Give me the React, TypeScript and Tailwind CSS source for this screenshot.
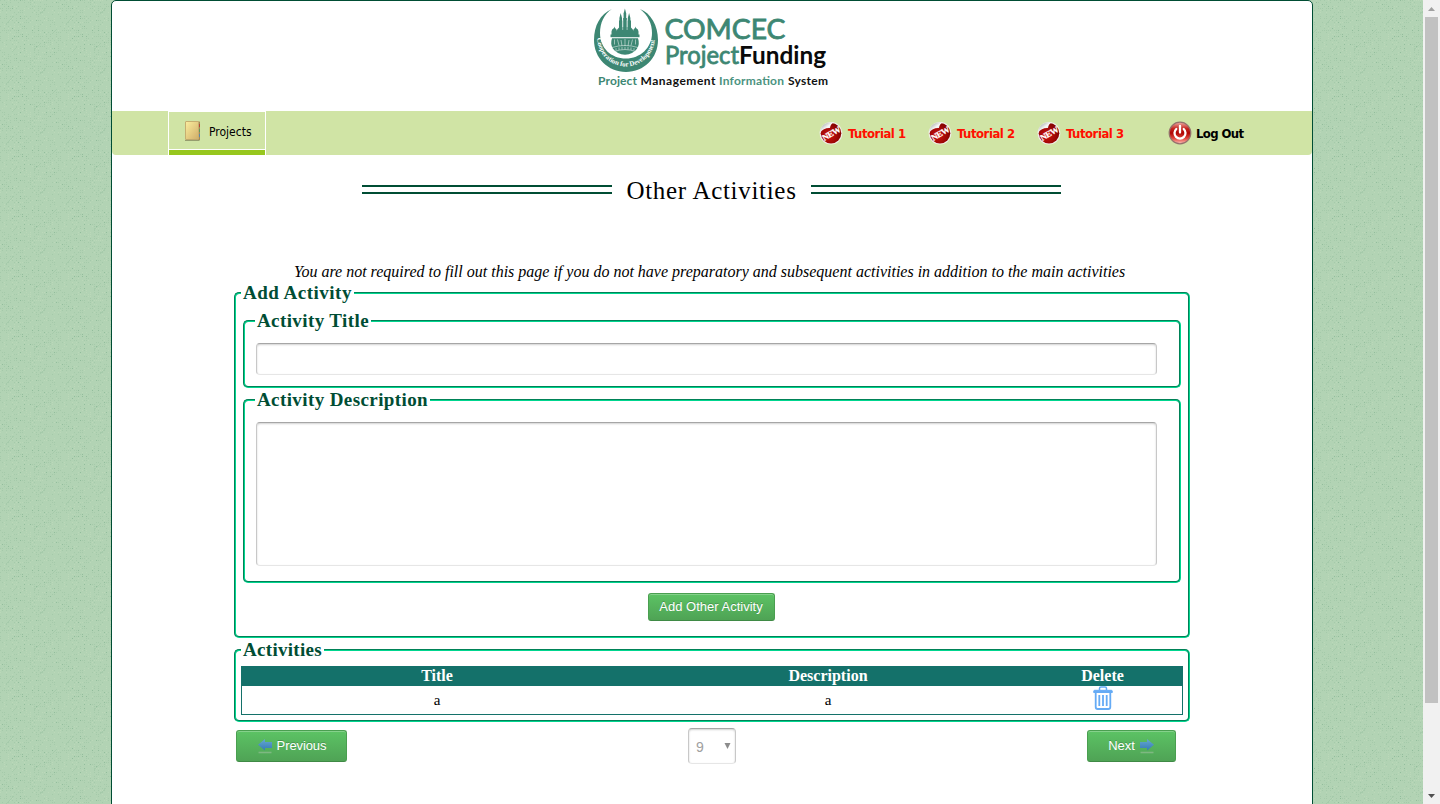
import type { ReactNode } from "react";

const fieldsetStyle =
  "rounded-[5px] border-2 [border-style:groove] border-[#00d68f] min-w-0";
const legendStyle =
  "h-[22px] px-[2px] font-['Liberation_Serif',serif] text-[19px] font-bold leading-[22px] text-[#004d34] whitespace-nowrap";
const inputStyle =
  "block w-[901px] resize-none rounded-[4px] border border-[#c8c8c8] border-t-[#a6a6a6] border-b-[#e6e6e6] bg-white shadow-[inset_0_1px_2px_rgba(0,0,0,0.18)] outline-none";
const buttonStyle =
  "flex items-center justify-center rounded-[3px] border border-[#4a9f50] border-b-[#3f8a45] bg-linear-to-b from-[#5cc364] to-[#4fa355] font-['Liberation_Sans',sans-serif] text-[13px] text-white shadow-[inset_0_1px_0_rgba(255,255,255,0.25)] [text-shadow:0_-1px_0_rgba(0,0,0,0.2)]";

const grain = Array.from({ length: 520 }, (_, i) => {
  const v = Math.sin(i * 12.9898 + 4.1) * 43758.5453;
  const w = Math.sin(i * 78.233 + 1.7) * 12543.123;
  return {
    x: Math.floor((v - Math.floor(v)) * 30) * 2,
    y: Math.floor((w - Math.floor(w)) * 30) * 2,
    fill: i % 13 === 0 ? "#92bd9c" : i % 3 === 0 ? "#bbd8b9" : "#a5caaa",
  };
});

function Texture() {
  return (
    <svg className="absolute inset-0 h-full w-full" shapeRendering="crispEdges">
      <defs>
        <pattern id="grain" width="60" height="60" patternUnits="userSpaceOnUse">
          <rect width="60" height="60" fill="#b2d3b4" />
          {grain.map((g, i) => (
            <rect key={i} x={g.x} y={g.y} width="1" height="1" fill={g.fill} />
          ))}
          <path d="M6 24l8-8M34 50l7-7M40 14l6-6M12 52l5-5M52 34l5-5" stroke="#a6cbab" strokeWidth="1" />
        </pattern>
      </defs>
      <rect width="100%" height="100%" fill="url(#grain)" />
    </svg>
  );
}

function Logo() {
  return (
    <svg width="240" height="88" viewBox="590 4 240 88" className="block">
      <defs>
        <path id="motto" d="M597 37 A29 29.500 0 0 0 655 37" />
      </defs>
      <path
        d="M612 9 C600 14 594 26 594 40 C594 58 608 72 626 72 C644 72 658 58 658 40 C658 26 651 13 640 9 C648 15 652 24 652 33 C652 48 640 58.500 626 58.500 C611 58.500 600 48 600 33 C600 23 604 14 612 9Z"
        fill="#3d8773"
      />
      <g fill="#3d8773">
        <path d="M624.900 8.500l1.300 5v18h-2.600v-18z" />
        <path d="M620.700 13l1.300 5v14h-2.600V18zM629.100 13l1.300 5v14h-2.600V18z" />
        <path d="M619 20.500h3.500v12H619zM623.200 18h3.600v14h-3.600zM627.500 20.500h3.500v12h-3.500z" />
        <path d="M616.500 31q2-4 4-4h9q2 0 4 4v5h-17z" />
        <path d="M611.500 31.500q0-2.500 2.500-3.500l.5-1.500.5 1.500q2 1 2 3.500v4h-5.500zM633 31.500q0-2.500 2-3.500l.5-1.500.5 1.500q2.500 1 2.500 3.500v4H633z" />
        <path d="M610.500 34.500h29v2.700h-29z" />
        <path d="M612 38.300h26q2 6-1 10.500q-4 5.500-12 6q-8-.5-12-6q-3-4.500-1-10.500z" />
      </g>
      <g stroke="#fff" strokeWidth="0.700" fill="none" strokeOpacity="0.7">
        <path d="M622.700 20v10M627.100 20v10M614.500 39.500v5M617.500 39.500l1.500 6M621 40l1 6M625 39v7M629 40l-1 6M632.500 39.500l-1.500 6M635.500 39.500v5" />
        <path d="M612 47.500q13-4 26 0M614.500 51.500q10.500-4 21 0" />
        <path d="M616 48.200v2.300M619 47.400v2.500M622 47v2.500M625 46.800v2.500M628 47v2.500M631 47.400v2.500M634 48.200v2.300" />
      </g>
      <text fontFamily="Liberation Serif, serif" fontSize="6.900" fontWeight="700" fill="#fff">
        <textPath href="#motto" startOffset="1">Cooperation for Development</textPath>
      </text>
      <g fontFamily="Lato, sans-serif">
        <text x="664.500" y="38.800" fontSize="27" fill="#3d8773" stroke="#3d8773" strokeWidth="0.800" textLength="121" lengthAdjust="spacingAndGlyphs">COMCEC</text>
        <text x="665" y="63.500" fontSize="25.500" fill="#3d8773" stroke="#3d8773" strokeWidth="0.800" textLength="74" lengthAdjust="spacingAndGlyphs">Project</text>
        <text x="739" y="63.500" fontSize="25.500" fontWeight="700" fill="#0a0a0a" textLength="87" lengthAdjust="spacingAndGlyphs">Funding</text>
        <text x="598" y="85" fontSize="12" fontWeight="700" fill="#3d8773" textLength="39">Project</text>
        <text x="640.500" y="85" fontSize="12" fontWeight="700" fill="#111" textLength="75">Management</text>
        <text x="719" y="85" fontSize="12" fontWeight="700" fill="#4b9380" textLength="65">Information</text>
        <text x="788" y="85" fontSize="12" fontWeight="700" fill="#111" textLength="40">System</text>
      </g>
    </svg>
  );
}

function BookIcon() {
  return (
    <svg width="17" height="22" viewBox="0 0 17 22">
      <defs>
        <linearGradient id="book" x1="0" y1="0" x2="1" y2="1">
          <stop offset="0" stopColor="#fbee9f" />
          <stop offset="1" stopColor="#d0ad68" />
        </linearGradient>
      </defs>
      <rect x="13" y="1.500" width="3" height="18.500" rx="0.500" fill="#a58a52" />
      <path d="M15 4h1v3h-1z" fill="#b5483a" />
      <path d="M15 9h1v3h-1z" fill="#5f9a55" />
      <path d="M15 14h1v3h-1z" fill="#5c86a8" />
      <rect x="1.500" y="1.500" width="13" height="18" rx="0.500" fill="url(#book)" stroke="#c6ae70" />
      <path d="M1 20.400h14.500" stroke="#6d6a46" strokeOpacity=".65" />
    </svg>
  );
}

function NewBadge() {
  return (
    <svg width="24" height="24" viewBox="0 0 24 24">
      <defs>
        <radialGradient id="badge" cx=".4" cy=".6" r=".65">
          <stop offset="0" stopColor="#d3130f" />
          <stop offset="1" stopColor="#7e0000" />
        </radialGradient>
        <linearGradient id="peel" x1="0" y1="0" x2="1" y2="1">
          <stop offset="0.150" stopColor="#a5aaa5" />
          <stop offset=".5" stopColor="#fafafa" />
          <stop offset="1" stopColor="#b0b0b0" />
        </linearGradient>
      </defs>
      <circle cx="12" cy="12.300" r="11.300" fill="#f0efe8" />
      <circle cx="12" cy="12.300" r="10.300" fill="url(#badge)" />
      <path d="M.7 12Q1 7 5 3.500Q9 .5 15 1.300Q11.500 3 11 7Q5 6.500 .7 12z" fill="url(#peel)" />
      <text x="12" y="15.500" textAnchor="middle" transform="rotate(-30 12 12)" fontFamily="Liberation Serif, serif" fontSize="8.500" fontWeight="700" fill="#fff" stroke="#fff" strokeWidth=".25" textLength="19.500" lengthAdjust="spacingAndGlyphs">
        NEW
      </text>
    </svg>
  );
}

function PowerIcon() {
  return (
    <svg width="24" height="24" viewBox="0 0 24 24">
      <defs>
        <linearGradient id="power" x1="0" y1="0" x2="0" y2="1">
          <stop offset="0" stopColor="#f0b0a8" />
          <stop offset=".3" stopColor="#c5231d" />
          <stop offset=".5" stopColor="#b00503" />
          <stop offset=".75" stopColor="#e0473e" />
          <stop offset="1" stopColor="#ffc4bb" />
        </linearGradient>
      </defs>
      <circle cx="12" cy="12" r="10.800" fill="url(#power)" stroke="#94716c" strokeWidth="1.200" />
      <path d="M8.300 8a5.500 5.500 0 1 0 7.400 0" fill="none" stroke="#fff" strokeWidth="2.300" strokeLinecap="round" />
      <path d="M12 5v6.500" stroke="#fff" strokeWidth="2.300" strokeLinecap="round" />
    </svg>
  );
}

function ArrowIcon({ flip = false }: { flip?: boolean }) {
  return (
    <svg width="16" height="16" viewBox="0 0 16 16" className={flip ? "-scale-x-100" : ""}>
      <defs>
        <linearGradient id="arrow" x1="0" y1="0" x2="0" y2="1">
          <stop offset="0" stopColor="#65a9d2" />
          <stop offset="1" stopColor="#3579b4" />
        </linearGradient>
      </defs>
      <path d="M1 4h7V1l7 5.800-7 5.700V10H1z" fill="url(#arrow)" />
      <path d="M1.500 14.500h13" stroke="#a9c4a9" strokeOpacity=".5" strokeWidth="1.600" />
    </svg>
  );
}

function TrashIcon() {
  return (
    <svg width="20" height="24" viewBox="0 0 20 24" fill="none" stroke="#65abf5">
      <path d="M6.500 4V2.500q0-1.500 1.500-1.500h4q1.500 0 1.500 1.500V4" strokeWidth="1.500" />
      <path d="M.7 6.500V5.300q0-1 1-1h16.600q1 0 1 1v1.200z" fill="#65abf5" strokeWidth="1" />
      <path d="M2.700 7v14q0 2 2 2h10.600q2 0 2-2V7" strokeWidth="1.800" />
      <path d="M6.300 9v11M10 9v11M13.700 9v11" strokeWidth="1.800" />
    </svg>
  );
}

function Tutorial({ children }: { children: ReactNode }) {
  return (
    <a className="flex w-[109px] items-center gap-[5px] text-[#ff0f00]">
      <NewBadge />
      <span className="pt-[2px] whitespace-nowrap">{children}</span>
    </a>
  );
}

function Rule() {
  return <div className="mt-[30px] h-[9px] w-[250px] border-y-2 border-[#004d34]" />;
}

export default function App() {
  return (
    <div className="relative flex h-[804px] w-[1440px] overflow-hidden font-['Liberation_Serif',serif] text-black">
      <Texture />
      <main className="relative ml-[111px] h-[820px] w-[1202px] shrink-0 rounded-[5px] border border-[#004d34] bg-white">
        <header className="h-[110px] pt-[3px] pl-[478px]">
          <Logo />
        </header>

        <nav className="flex h-[44px] rounded-b-[4px] bg-[#d0e4a5] font-['DejaVu_Sans_Condensed','DejaVu_Sans',sans-serif]">
          <a className="ml-[56px] flex h-[44px] w-[98px] flex-col border-x border-t border-white text-[12px]">
            <span className="flex h-[38px] shrink-0 items-center gap-[8px] border-b border-white pl-[15px]">
              <BookIcon />
              <span className="pt-[3px]">Projects</span>
            </span>
            <span className="h-[5px] w-full bg-[#97c71e]" />
          </a>
          <div className="ml-[553px] flex items-center text-[13px] font-bold tracking-[-0.48px]">
            <Tutorial>Tutorial 1</Tutorial>
            <Tutorial>Tutorial 2</Tutorial>
            <Tutorial>Tutorial 3</Tutorial>
            <a className="ml-[22px] flex items-center gap-[4px] tracking-[-0.6px]">
              <PowerIcon />
              <span className="pt-[2px] whitespace-nowrap">Log Out</span>
            </a>
          </div>
        </nav>

        <div className="flex h-[106px] pl-[250px]">
          <Rule />
          <h1 className="w-[199px] pt-[20px] text-center text-[25px] leading-[32px] tracking-[0.7px] whitespace-nowrap">
            Other Activities
          </h1>
          <Rule />
        </div>

        <div className="ml-[122px] w-[956px]">
          <p className="h-[21px] pl-[60px] pt-[1px] text-[16px] italic leading-[20px] whitespace-nowrap">
            You are not required to fill out this page if you do not have preparatory and subsequent activities in addition to the main activities
          </p>

          <fieldset className={`${fieldsetStyle} h-[356px] px-[7px]`}>
            <legend className={`${legendStyle} -ml-[2px] tracking-[0.5px]`}>Add Activity</legend>
            <div className="-mt-px pt-[7px]">
              <fieldset className={`${fieldsetStyle} h-[78px] w-[938px] px-[11px]`}>
                <legend className={`${legendStyle} -ml-px tracking-[0.4px]`}>Activity Title</legend>
                <input className={`${inputStyle} mt-[11px] h-[32px] px-2`} />
              </fieldset>
              <fieldset className={`${fieldsetStyle} mt-px h-[194px] w-[938px] px-[11px]`}>
                <legend className={`${legendStyle} -ml-px tracking-[0.4px]`}>Activity Description</legend>
                <textarea className={`${inputStyle} mt-[11px] h-[144px] p-2`} />
              </fieldset>
              <div className="flex justify-center pt-[10px] pr-[2px]">
                <button className={`${buttonStyle} h-[28px] w-[127px]`}>Add Other Activity</button>
              </div>
            </div>
          </fieldset>

          <fieldset className={`${fieldsetStyle} mt-px h-[83px] px-[5px]`}>
            <legend className={`${legendStyle} tracking-[0.3px]`}>Activities</legend>
            <div className="mt-[5px] h-[49px] w-[942px] border border-t-0 border-[#14716a] text-center">
              <div className="grid h-[20px] grid-cols-[390px_392px_157px] bg-[#14716a] text-[16px] font-bold leading-[20px] text-white">
                <span>Title</span>
                <span>Description</span>
                <span>Delete</span>
              </div>
              <div className="grid h-[28px] grid-cols-[390px_392px_157px] text-[15px] leading-[28px]">
                <span>a</span>
                <span>a</span>
                <span className="flex justify-center">
                  <TrashIcon />
                </span>
              </div>
            </div>
          </fieldset>

          <div className="flex items-start pt-[6px] pl-[2px]">
            <button className={`${buttonStyle} mt-[2px] h-[32px] w-[111px] gap-[4px] tracking-[-0.1px]`}>
              <ArrowIcon flip />
              Previous
            </button>
            <div className="ml-[341px] flex h-[36px] w-[48px] items-center justify-between rounded-[4px] border border-[#c8c8c8] border-t-[#a6a6a6] border-b-[#e6e6e6] bg-white pl-[7px] pr-[4px] font-['Liberation_Sans',sans-serif] text-[14px] text-[#a0a0a0] shadow-[inset_0_1px_2px_rgba(0,0,0,0.18)]">
              <span className="pt-[2px]">9</span>
              <svg width="7" height="6" viewBox="0 0 7 6">
                <path d="M.5 0h6L3.500 6z" fill="#8c8c8c" />
              </svg>
            </div>
            <button className={`${buttonStyle} ml-[351px] mt-[2px] h-[32px] w-[89px] gap-[4px]`}>
              Next
              <ArrowIcon />
            </button>
          </div>
        </div>
      </main>

      <div className="relative ml-auto flex w-[17px] flex-col items-center bg-[#f1f1f1]">
        <div className="flex h-[17px] items-center">
          <svg width="7" height="4" viewBox="0 0 7 4">
            <path d="M0 4h7L3.500 0z" fill="#a0a0a0" />
          </svg>
        </div>
        <div className="h-[686px] w-[13px] bg-[#c1c1c1]" />
        <div className="mt-auto flex h-[17px] items-center">
          <svg width="7" height="4" viewBox="0 0 7 4">
            <path d="M0 0h7L3.500 4z" fill="#505050" />
          </svg>
        </div>
      </div>
    </div>
  );
}
